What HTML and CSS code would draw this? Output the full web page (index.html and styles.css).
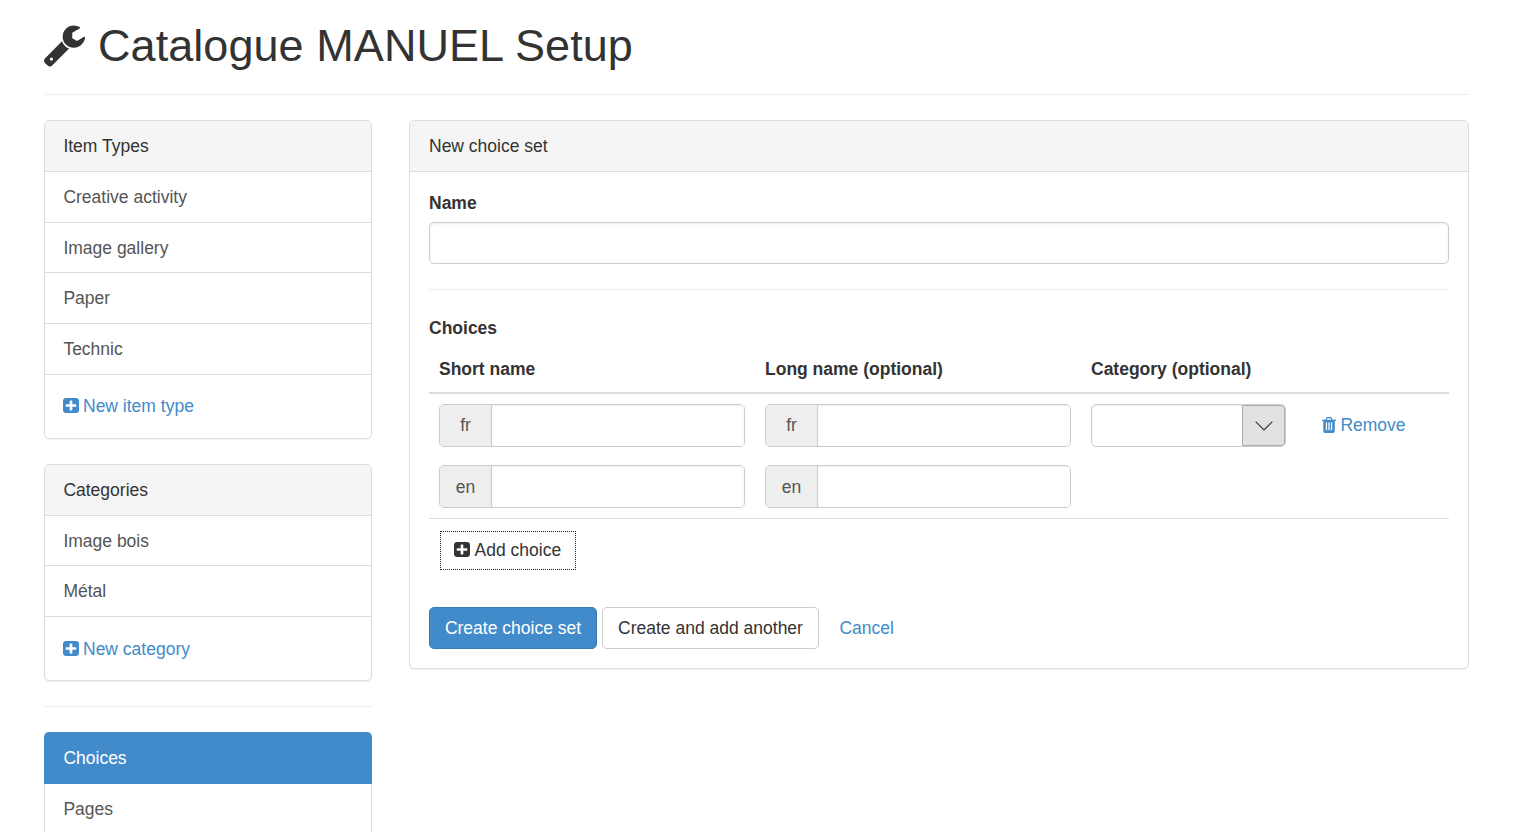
FILE: index.html
```html
<!DOCTYPE html>
<html lang="en">
<head>
<meta charset="utf-8">
<title>Catalogue MANUEL Setup</title>
<link rel="stylesheet" href="styles.css">
</head>
<body>
<svg class="defs" aria-hidden="true">
  <symbol id="plus" viewBox="128 128 1536 1536" preserveAspectRatio="none"><path d="M1408 960v-128q0-26-19-45t-45-19h-320v-320q0-26-19-45t-45-19h-128q-26 0-45 19t-19 45v320h-320q-26 0-45 19t-19 45v128q0 26 19 45t45 19h320v320q0 26 19 45t45 19h128q26 0 45-19t19-45v-320h320q26 0 45-19t19-45zm256-544v960q0 119-84.500 203.500t-203.500 84.500h-960q-119 0-203.500-84.500t-84.500-203.500v-960q0-119 84.500-203.500t203.500-84.500h960q119 0 203.500 84.500t84.500 203.500z"/></symbol>
</svg>
<header class="page-header">
  <svg class="wrench" viewBox="85 128 1641 1643"><path d="M448 1472q0-26-19-45t-45-19-45 19-19 45 19 45 45 19 45-19 19-45zm644-420l-682 682q-37 37-90 37-52 0-91-37l-106-108q-38-36-38-90 0-53 38-91l681-681q39 98 114.500 173.500t173.500 114.500zm634-435q0 39-23 106-47 134-164.500 217.500t-258.500 83.500q-185 0-316.500-131.500t-131.500-316.500 131.500-316.500 316.500-131.500q58 0 121.500 16.500t107.500 46.500q16 11 16 28t-16 28l-293 169v224l193 107q5-3 79-48.500t135.500-81 70.500-35.500q15 0 23.500 10t8.500 25z"/></svg>
  <h1>Catalogue MANUEL Setup</h1>
</header>
<div class="columns">
  <aside class="sidebar">
    <section class="panel">
      <h2 class="panel-heading">Item Types</h2>
      <a class="item tall">Creative activity</a>
      <a class="item">Image gallery</a>
      <a class="item tall">Paper</a>
      <a class="item tall">Technic</a>
      <div class="panel-footer"><a class="link"><svg class="icon raised"><use href="#plus"/></svg><span>New item type</span></a></div>
    </section>
    <section class="panel">
      <h2 class="panel-heading">Categories</h2>
      <a class="item">Image bois</a>
      <a class="item tall">Métal</a>
      <div class="panel-footer low"><a class="link"><svg class="icon raised"><use href="#plus"/></svg><span>New category</span></a></div>
    </section>
    <hr class="side-rule">
    <nav class="nav-list">
      <a class="nav-item active">Choices</a>
      <a class="nav-item">Pages</a>
    </nav>
  </aside>
  <main class="panel main">
    <h2 class="panel-heading">New choice set</h2>
    <form class="panel-body">
      <label class="label" for="name">Name</label>
      <input class="control" id="name">
      <hr class="rule">
      <div class="label">Choices</div>
      <div class="grid head">
        <div>Short name</div><div>Long name (optional)</div><div>Category (optional)</div><div></div>
      </div>
      <div class="grid row">
        <div class="stack">
          <div class="group"><span class="addon">fr</span><input class="group-input"></div>
          <div class="group"><span class="addon low">en</span><input class="group-input"></div>
        </div>
        <div class="stack">
          <div class="group"><span class="addon">fr</span><input class="group-input"></div>
          <div class="group"><span class="addon low">en</span><input class="group-input"></div>
        </div>
        <div class="select"><span class="arrow"><svg class="chevron" viewBox="0 0 18 10"><path d="M.7.7 9 9 17.300.7"/></svg></span></div>
        <a class="link remove"><svg class="trash" viewBox="192 128 1408 1536" preserveAspectRatio="none"><path d="M704 1376v-704q0-14-9-23t-23-9h-64q-14 0-23 9t-9 23v704q0 14 9 23t23 9h64q14 0 23-9t9-23zm256 0v-704q0-14-9-23t-23-9h-64q-14 0-23 9t-9 23v704q0 14 9 23t23 9h64q14 0 23-9t9-23zm256 0v-704q0-14-9-23t-23-9h-64q-14 0-23 9t-9 23v704q0 14 9 23t23 9h64q14 0 23-9t9-23zm-544-992h448l-48-117q-7-9-17-11h-317q-10 2-17 11zm928 32v64q0 14-9 23t-23 9h-96v948q0 83-47 143.500t-113 60.500h-832q-66 0-113-58.500t-47-141.500v-952h-96q-14 0-23-9t-9-23v-64q0-14 9-23t23-9h309l70-167q15-37 54-63t79-26h320q40 0 79 26t54 63l70 167h309q14 0 23 9t9 23z"/></svg><span>Remove</span></a>
      </div>
      <a class="add"><svg class="icon raised"><use href="#plus"/></svg><span>Add choice</span></a>
      <div class="actions">
        <a class="btn primary">Create choice set</a>
        <a class="btn">Create and add another</a>
        <a class="link cancel">Cancel</a>
      </div>
    </form>
  </main>
</div>
</body>
</html>
```
FILE: styles.css
```css
* { box-sizing: border-box; }
html { overflow: hidden; height: 100%; }
body {
  margin: 0;
  height: 832px;
  overflow: hidden;
  padding: 0 44px;
  background: #fff;
  color: #333;
  font: 17.5px/25px "Liberation Sans", Arial, sans-serif;
}
h1, h2 { margin: 0; font-weight: 400; }
svg { display: block; fill: currentColor; }
.defs { position: absolute; width: 0; height: 0; }
.page-header {
  display: flex;
  height: 95px;
  padding-top: 21px;
  border-bottom: 1px solid #eee;
}
.page-header h1 { margin-left: 13px; font-size: 45px; line-height: 50px; letter-spacing: .06px; white-space: nowrap; }
.wrench { width: 41px; height: 42px; margin-top: 4px; }
.columns { display: flex; gap: 37px; align-items: flex-start; margin-top: 25px; }
.sidebar { width: 328px; flex: none; }
.panel {
  border: 1px solid #ddd;
  border-radius: 5px;
  box-shadow: 0 1px 1px rgba(0, 0, 0, .05);
  background: #fff;
}
.sidebar .panel { margin-bottom: 25px; }
.panel-heading {
  height: 51px;
  padding: 12px 19px;
  font-size: 17.5px;
  line-height: 26px;
  background: #f5f5f5;
  border-bottom: 1px solid #ddd;
  border-radius: 4px 4px 0 0;
}
.sidebar .panel-heading { padding-left: 18.4px; }
.item {
  display: block;
  height: 50px;
  padding: 13px 18.4px 11px;
  color: #555;
  border-bottom: 1px solid #ddd;
}
.item.tall { height: 51px; }
.panel-footer { height: 63px; padding: 19px 18px; }
.panel-footer.low { padding-top: 20px; }
.link { display: flex; align-items: center; color: #428bca; }
.icon { width: 16px; height: 15px; margin-right: 4px; }
.icon.raised { margin-bottom: 2px; }
.side-rule { height: 1px; margin: 0 0 25px; border: 0; background: #eee; }
.nav-item {
  display: block;
  height: 51px;
  padding: 13px 18.4px;
  color: #555;
  border: solid #ddd;
  border-width: 0 1px 1px;
}
.nav-item.active {
  height: 52px;
  padding: 14px 19.4px;
  border: 0;
  border-radius: 5px 5px 0 0;
  background: #428bca;
  color: #fff;
}
.main { flex: 1; height: 549px; }
.panel-body { padding: 19px; }
.label { display: block; height: 25px; font-weight: 700; }
.control {
  display: block;
  width: 100%;
  height: 42px;
  margin-top: 6px;
  border: 1px solid #ccc;
  border-radius: 5px;
  box-shadow: inset 0 1px 2px rgba(0, 0, 0, .08);
}
.rule { height: 1px; margin: 25px 0 26px; border: 0; background: #eee; }
.grid {
  display: grid;
  grid-template-columns: 306px 306px 195px 1fr;
  column-gap: 20px;
  padding: 0 10px;
}
.head { height: 53px; padding-top: 16px; font-weight: 700; border-bottom: 2px solid #ddd; white-space: nowrap; }
.row { height: 125px; padding-top: 10px; border-bottom: 1px solid #ddd; }
.stack { display: flex; flex-direction: column; gap: 18px; }
.group {
  display: flex;
  height: 43px;
  border: 1px solid #ccc;
  border-radius: 5px;
  overflow: hidden;
}
.addon {
  width: 52px;
  border-right: 1px solid #ccc;
  background: #eee;
  color: #555;
  line-height: 41px;
  text-align: center;
}
.addon.low { line-height: 43px; }
.group-input { flex: 1; min-width: 0; border: 0; box-shadow: inset 0 1px 2px rgba(0, 0, 0, .08); }
.select {
  display: flex;
  justify-content: flex-end;
  height: 43px;
  border: 1px solid #ccc;
  border-radius: 5px;
  box-shadow: inset 0 1px 2px rgba(0, 0, 0, .08);
}
.arrow {
  display: flex;
  align-items: center;
  justify-content: center;
  width: 43px;
  height: 41px;
  background: #e1e1e1;
  border: 1px solid #adadad;
  border-radius: 0 4px 4px 0;
}
.chevron { width: 18px; height: 10px; fill: none; stroke: #333; stroke-width: 1.1; }
.remove { height: 43px; padding-left: 16px; }
.trash { width: 14px; height: 16px; margin: 0 4.4px 2px 0; }
.add {
  display: flex;
  align-items: center;
  width: 136px;
  height: 39px;
  margin: 12px 0 0 11px;
  padding: 0 13px 1px;
  border: 1px dotted #222;
  white-space: nowrap;
}
.add .icon { margin-right: 4.600px; }
.actions { display: flex; margin-top: 37px; white-space: nowrap; }
.btn {
  width: 217px;
  height: 42px;
  border: 1px solid #ccc;
  border-radius: 5px;
  line-height: 40px;
  text-align: center;
}
.btn.primary { width: 168px; margin-right: 5px; background: #428bca; border-color: #357ebd; color: #fff; }
.cancel { margin-left: 20.400px; }
```
